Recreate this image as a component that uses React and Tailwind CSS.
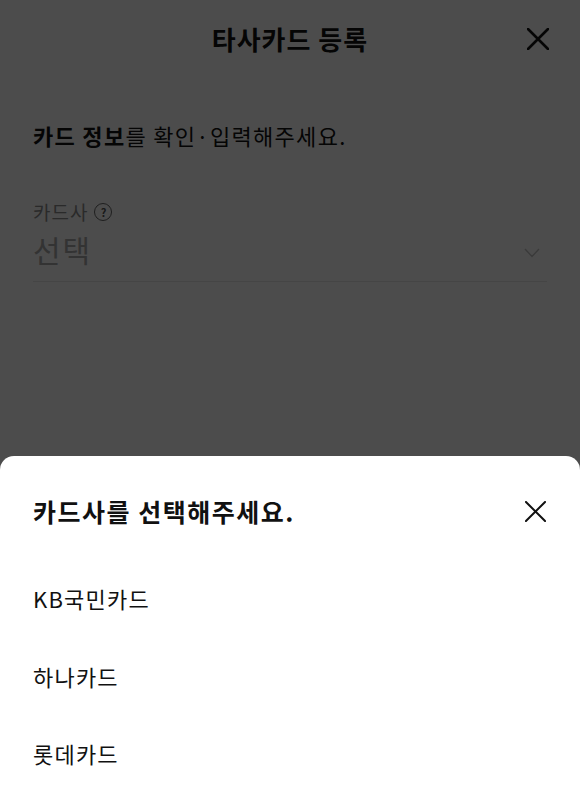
const font = { fontFamily: '"Noto Sans CJK KR", "Noto Sans", sans-serif' };

const companies = ["KB국민카드", "하나카드", "롯데카드"];

const CloseIcon = ({ size = 22, stroke = 2.4, className = "" }) => (
  <svg width={size} height={size} viewBox="0 0 22 22" className={className}>
    <path d="M1 1 L21 21 M21 1 L1 21" stroke="currentColor" strokeWidth={stroke} strokeLinecap="round" fill="none" />
  </svg>
);

const App = () => {
  return (
    <div className="relative h-[792px] w-full overflow-hidden bg-white text-[#111]" style={font}>
      {/* Page behind the sheet */}
      <header className="relative flex h-[76px] items-center justify-center">
        <h1 className="text-[26px] font-bold tracking-[1px]">타사카드 등록</h1>
        <button className="absolute right-[31px] top-[28px]">
          <CloseIcon size={22} stroke={2.6} />
        </button>
      </header>

      <div className="px-[33px] pt-[44px]">
        <p className="text-[22px] leading-[30px] tracking-[1.3px]">
          <span className="font-bold">카드 정보</span>를 확인·입력해주세요.
        </p>

        <div className="mt-[50px]">
          <div className="flex items-center gap-[6px] text-[#8c8c8c]">
            <span className="text-[19px] leading-[24px] tracking-[1px]">카드사</span>
            <span className="flex h-[18px] w-[18px] items-center justify-center rounded-full border-[1.8px] border-[#666] text-[11px] font-bold leading-none text-[#555]">
              ?
            </span>
          </div>
          <div className="mt-[4px] flex items-center justify-between border-b border-[#e6e6e6] pb-[11px]">
            <span className="text-[30px] leading-[42px] tracking-[2px] text-[#aaa]">선택</span>
            <svg width="16" height="10" viewBox="0 0 16 10" className="mr-[7px] mt-[8px] text-[#c4c4c4]">
              <path d="M1 1 L8 8.5 L15 1" stroke="currentColor" strokeWidth="1.4" fill="none" />
            </svg>
          </div>
        </div>
      </div>

      {/* Dim overlay */}
      <div className="absolute inset-0 bg-black/70" />

      {/* Bottom sheet */}
      <div className="absolute inset-x-0 top-[456px] bottom-0 rounded-t-[14px] bg-white">
        <div className="flex items-center justify-between px-[33px] pt-[38px]">
          <h2 className="text-[25px] font-bold leading-[34px] tracking-[1.5px]">카드사를 선택해주세요.</h2>
          <CloseIcon size={21} stroke={2.1} className="mr-[1px]" />
        </div>
        <ul className="mt-[55px] px-[33px]">
          {companies.map((name) => (
            <li key={name} className="h-[77.5px] text-[22px] leading-[30px] tracking-[1.2px]">
              {name}
            </li>
          ))}
        </ul>
      </div>
    </div>
  );
};

export default App;
